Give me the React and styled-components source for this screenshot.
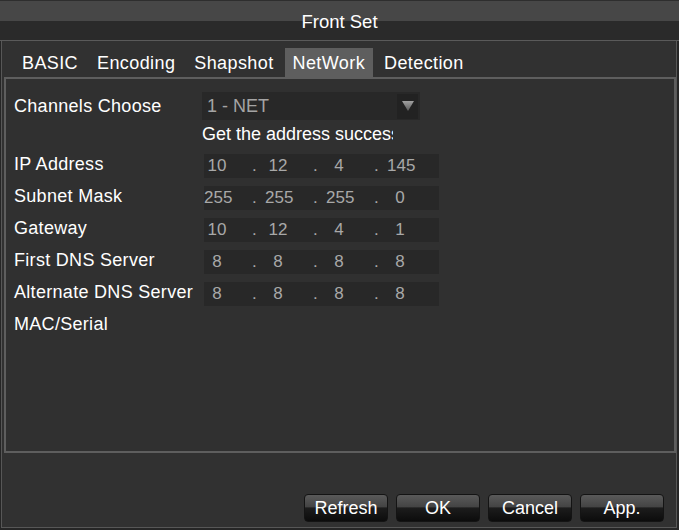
import React from 'react';
import styled, { createGlobalStyle } from 'styled-components';

const GlobalStyle = createGlobalStyle`
  html, body {
    margin: 0;
    padding: 0;
    background: #262626;
  }
  body {
    font-family: 'Liberation Sans', Arial, sans-serif;
  }
`;

const Window = styled.div`
  width: 679px;
  height: 530px;
  display: flex;
  flex-direction: column;
  background: #262626;
  overflow: hidden;
`;

const TitleBar = styled.div`
  height: 41px;
  box-sizing: border-box;
  border-top: 1px solid #2e2e2e;
  border-bottom: 1px solid #5a5a5a;
  background: linear-gradient(#474747 0, #474747 20px, #2a2a2a 20px, #2a2a2a 100%);
  display: flex;
  align-items: center;
  justify-content: center;
  color: #fff;
  font-size: 18.5px;
  padding-top: 2px;
`;

const Body = styled.div`
  margin-left: 1px;
  width: 676px;
  height: 487px;
  box-sizing: border-box;
  background: #313131;
  border: 1px solid #575757;
  border-top: none;
  padding: 7px 0 0 2px;
  display: flex;
  flex-direction: column;
`;

const TabRow = styled.div`
  display: flex;
  gap: 3px;
  padding-left: 10px;
  height: 29px;
`;

const Tab = styled.div`
  padding: 1px 8px 0;
  line-height: 29px;
  height: 29px;
  box-sizing: border-box;
  font-size: 18px;
  letter-spacing: 0.4px;
  color: #fff;
  background: ${(p) => (p.$active ? '#5e5e5e' : 'transparent')};
`;

const Panel = styled.div`
  width: 672px;
  height: 376px;
  box-sizing: border-box;
  border: 2px solid #5e5e5e;
  background: #303030;
  padding: 13px 0 0 8px;
  display: flex;
  flex-direction: column;
`;

const Row = styled.div`
  display: flex;
  align-items: ${(p) => (p.$center ? 'center' : 'flex-start')};
  height: ${(p) => p.$h}px;
`;

const Label = styled.div`
  width: 188px;
  flex: none;
  color: #fff;
  font-size: 18px;
  letter-spacing: 0.3px;
  line-height: 20px;
  white-space: nowrap;
`;

const Select = styled.div`
  width: 218px;
  height: 28px;
  box-sizing: border-box;
  background: #282828;
  display: flex;
  align-items: center;
  justify-content: space-between;
  padding: 0 2px 0 5px;
  color: #a4a4a4;
  font-size: 18px;
`;

const ArrowBox = styled.div`
  width: 21px;
  height: 25px;
  background: #222;
  display: flex;
  align-items: center;
  justify-content: center;
`;

const Status = styled.div`
  width: 191px;
  overflow: hidden;
  white-space: nowrap;
  color: #fff;
  font-size: 18px;
  line-height: 28px;
`;

const IpField = styled.div`
  margin-left: 2px;
  width: 235px;
  height: 24px;
  background: #282828;
  display: flex;
  align-items: center;
  color: #a8a8a8;
  font-size: 17px;
`;

const Octet = styled.div`
  width: 61px;
  flex: none;
  display: flex;
  align-items: center;
`;

const Num = styled.span`
  width: 26px;
  text-align: center;
`;

const Dot = styled.span`
  margin-left: 22px;
`;

const Spacer = styled.div`
  flex: 1;
`;

const ButtonRow = styled.div`
  display: flex;
  justify-content: flex-end;
  gap: 8px;
  padding: 0 12px 5px 0;
`;

const Button = styled.div`
  width: 84px;
  height: 28px;
  box-sizing: border-box;
  border: 1px solid #141414;
  border-radius: 4px;
  background: linear-gradient(#5a5a5a 0, #444 45%, #1c1c1c 50%, #0c0c0c 100%);
  color: #fff;
  font-size: 18px;
  display: flex;
  align-items: center;
  justify-content: center;
`;

const tabs = ['BASIC', 'Encoding', 'Shapshot', 'NetWork', 'Detection'];

const ipRows = [
  ['IP Address', ['10', '12', '4', '145']],
  ['Subnet Mask', ['255', '255', '255', '0']],
  ['Gateway', ['10', '12', '4', '1']],
  ['First DNS Server', ['8', '8', '8', '8']],
  ['Alternate DNS Server', ['8', '8', '8', '8']],
];

const Ip = ({ parts }) => (
  <IpField>
    {parts.map((p, i) => (
      <Octet key={i}>
        <Num>{p}</Num>
        {i < 3 && <Dot>.</Dot>}
      </Octet>
    ))}
  </IpField>
);

export default function App() {
  return (
    <>
      <GlobalStyle />
      <Window>
        <TitleBar>Front Set</TitleBar>
        <Body>
          <TabRow>
            {tabs.map((t) => (
              <Tab key={t} $active={t === 'NetWork'}>{t}</Tab>
            ))}
          </TabRow>
          <Panel>
            <Row $h={28} $center>
              <Label>Channels Choose</Label>
              <Select>
                1 - NET
                <ArrowBox>
                  <svg width="12" height="10" viewBox="0 0 12 10">
                    <defs>
                      <linearGradient id="tri" x1="0" y1="0" x2="0" y2="1">
                        <stop offset="0" stopColor="#a0a0a0" />
                        <stop offset="1" stopColor="#5a5a5a" />
                      </linearGradient>
                    </defs>
                    <polygon points="0,0 12,0 6,10" fill="url(#tri)" />
                  </svg>
                </ArrowBox>
              </Select>
            </Row>
            <Row $h={34}>
              <Label />
              <Status>Get the address success</Status>
            </Row>
            {ipRows.map(([label, parts]) => (
              <Row key={label} $h={32}>
                <Label>{label}</Label>
                <Ip parts={parts} />
              </Row>
            ))}
            <Row $h={32}>
              <Label>MAC/Serial</Label>
            </Row>
          </Panel>
          <Spacer />
          <ButtonRow>
            <Button>Refresh</Button>
            <Button>OK</Button>
            <Button>Cancel</Button>
            <Button>App.</Button>
          </ButtonRow>
        </Body>
      </Window>
    </>
  );
}
